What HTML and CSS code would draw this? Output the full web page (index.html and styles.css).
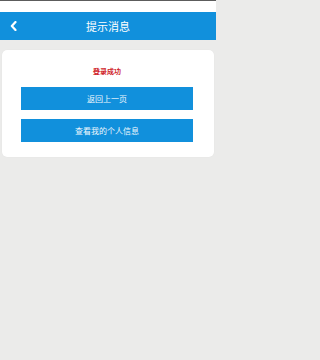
FILE: index.html
```html
<!DOCTYPE html>
<html lang="zh-CN">
<head>
<meta charset="utf-8">
<title>提示消息</title>
<link rel="stylesheet" href="styles.css">
</head>
<body>
<div class="topline"></div>
<div class="statusbar"></div>
<header class="navbar">
  <span class="back" aria-label="返回">
    <svg width="7" height="10" viewBox="0 0 7 10"><path d="M5.5 1 L1.8 5 L5.5 9" fill="none" stroke="#fff" stroke-width="2.2" stroke-linecap="round" stroke-linejoin="round"/></svg>
  </span>
  <h1 class="title">提示消息</h1>
</header>
<main class="card">
  <p class="message">登录成功</p>
  <a class="btn">返回上一页</a>
  <a class="btn">查看我的个人信息</a>
</main>
</body>
</html>
```
FILE: styles.css
```css
html, body {
  margin: 0;
  padding: 0;
}
body {
  background: #ebebea;
  font-family: "Noto Sans CJK SC", "Noto Sans", sans-serif;
  width: 216px;
  height: 360px;
  overflow: hidden;
}
.topline {
  height: 1px;
  background: #5c5c5c;
}
.statusbar {
  height: 11px;
  background: #ffffff;
}
.navbar {
  position: relative;
  height: 28px;
  background: #1190dc;
  display: flex;
  align-items: center;
  justify-content: center;
}
.back {
  position: absolute;
  left: 10px;
  top: 9px;
  display: flex;
}
.title {
  margin: 0;
  font-size: 11px;
  font-weight: normal;
  color: #ffffff;
  line-height: 28px;
}
.card {
  margin: 10px 2px 0 2px;
  background: #ffffff;
  border-radius: 5px;
  padding: 16px 21px 15px 19px;
  display: flex;
  flex-direction: column;
  box-shadow: 0 0 1px rgba(0,0,0,0.08);
}
.message {
  margin: 0 0 11px;
  text-align: center;
  color: #d0262c;
  font-size: 7px;
  font-weight: bold;
  line-height: 10px;
}
.btn {
  display: flex;
  align-items: center;
  justify-content: center;
  height: 23px;
  background: #1190dc;
  color: #eef7fd;
  font-size: 8px;
}
.btn + .btn {
  margin-top: 9px;
}
```
